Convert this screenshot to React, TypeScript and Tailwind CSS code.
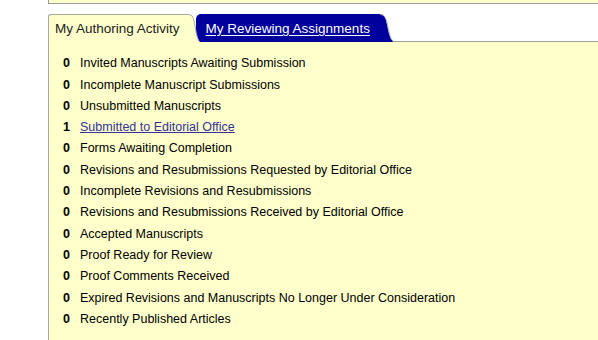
const ITEMS: { count: number; label: string; link?: boolean }[] = [
  { count: 0, label: "Invited Manuscripts Awaiting Submission" },
  { count: 0, label: "Incomplete Manuscript Submissions" },
  { count: 0, label: "Unsubmitted Manuscripts" },
  { count: 1, label: "Submitted to Editorial Office", link: true },
  { count: 0, label: "Forms Awaiting Completion" },
  { count: 0, label: "Revisions and Resubmissions Requested by Editorial Office" },
  { count: 0, label: "Incomplete Revisions and Resubmissions" },
  { count: 0, label: "Revisions and Resubmissions Received by Editorial Office" },
  { count: 0, label: "Accepted Manuscripts" },
  { count: 0, label: "Proof Ready for Review" },
  { count: 0, label: "Proof Comments Received" },
  { count: 0, label: "Expired Revisions and Manuscripts No Longer Under Consideration" },
  { count: 0, label: "Recently Published Articles" },
];

export default function App() {
  return (
    <div
      className="h-[340px] w-[598px] overflow-hidden bg-white pl-[48px] text-black"
      style={{ fontFamily: '"Liberation Sans", Arial, sans-serif' }}
    >
      {/* tail of the box above */}
      <div className="h-[4px] border-b border-l border-[#9a9a9a] bg-[#ffffcc]" />

      {/* tabs */}
      <div className="mt-[10px] flex h-[28px] items-stretch">
        <div className="relative z-10 flex">
          <div className="flex items-center rounded-tl-[3px] border-l border-t border-[#a8a8a8] bg-[#ffffcc] pl-[6px] pr-[8px] pt-[2px] text-[13.5px] text-[#222]">
            My Authoring Activity
          </div>
          <svg width="12" height="28" viewBox="0 0 12 28" className="block">
            <path d="M0 0 C5 0 5.5 4 7 12 C8.5 21 10 27 12 28 L0 28 Z" fill="#ffffcc" />
            <path d="M0 0.5 C5 0.5 5.5 4 7 12 C8.5 21 10 27 12 28" fill="none" stroke="#a8a8a8" strokeWidth="1" />
          </svg>
        </div>
        <div className="-ml-[4px] flex">
          <div className="flex items-center rounded-tl-[5px] bg-[#00009c] pl-[10px] pr-[9px] pt-[2px] text-[13.5px] text-white underline underline-offset-2">
            My Reviewing Assignments
          </div>
          <svg width="15" height="28" viewBox="0 0 15 28" className="block">
            <path d="M0 0 C6 0 7 5 8.5 13 C10 21 12 27 15 28 L0 28 Z" fill="#00009c" />
            <path d="M1 0.6 C6 0.6 7.5 5 9 13 C10.5 21 12.5 27 15 27.6" fill="none" stroke="#9a9ab8" strokeWidth="0.8" />
          </svg>
        </div>
        <div className="flex-1 border-b border-[#a0a0a0]" />
      </div>

      {/* activity list */}
      <div className="h-[300px] border-l border-[#a8a8a8] bg-[#ffffcc] pl-[14px] pt-[11px] text-[12.5px]">
        {ITEMS.map((it) => (
          <div key={it.label} className="flex h-[21.3px] items-center">
            <span className="w-[17px] font-bold">{it.count}</span>
            {it.link ? (
              <a href="#" className="text-[#333399] underline underline-offset-1">
                {it.label}
              </a>
            ) : (
              <span>{it.label}</span>
            )}
          </div>
        ))}
      </div>
    </div>
  );
}
